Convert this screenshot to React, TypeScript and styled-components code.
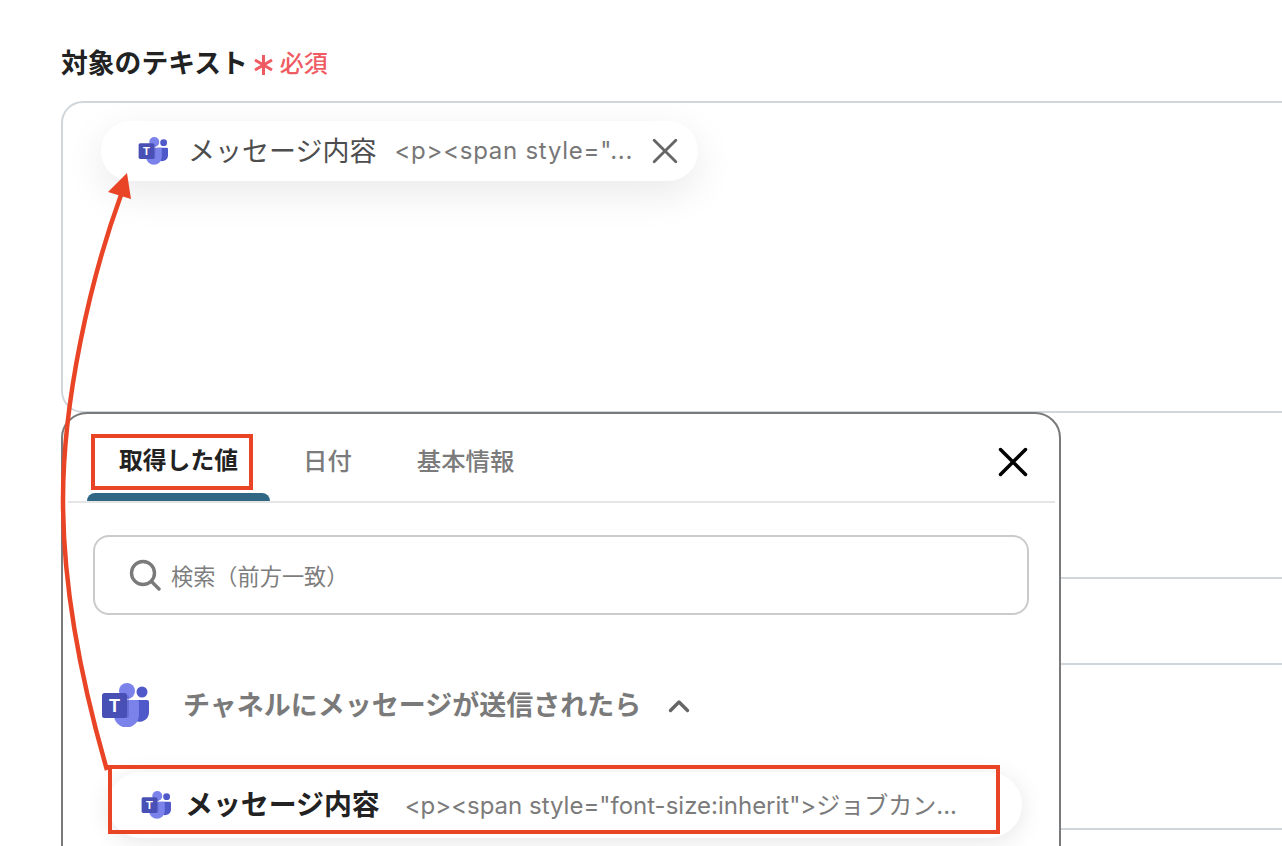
import * as React from "react";
import styled, { createGlobalStyle, css } from "styled-components";

const FONT = `Inter, "Noto Sans CJK JP", "Noto Sans", sans-serif`;
const RED = "#ea4426";

// kana and kanji sit a little low in the line box next to Inter
const raised = css`
  padding-bottom: 4px;
`;

const GlobalStyle = createGlobalStyle`
  html, body {
    margin: 0;
    padding: 0;
    background: #ffffff;
    overflow: hidden;
  }
  * {
    box-sizing: border-box;
  }
`;

const Page = styled.div`
  position: relative;
  width: 1282px;
  height: 846px;
  overflow: hidden;
  padding: 44px 0 0 61px;
  font-family: ${FONT};
`;

const LabelRow = styled.div`
  display: flex;
  align-items: center;
  height: 38px;
  margin-bottom: 19px;
`;

const LabelText = styled.span`
  ${raised}
  font-size: 26.8px;
  font-weight: 600;
  color: #222222;
  white-space: nowrap;
`;

const RequiredMark = styled.span`
  margin: 3px 0 0 5px;
  width: 22px;
  display: flex;
  justify-content: center;
  color: #ef5b62;
`;

const RequiredText = styled.span`
  ${raised}
  margin-left: 5px;
  font-size: 24px;
  font-weight: 500;
  color: #ef5b62;
  white-space: nowrap;
`;

const FieldStack = styled.div`
  display: flex;
  flex-direction: column;
  width: 1300px;
`;

const FieldBox = styled.div<{ $height: number; $gap?: number }>`
  height: ${(p) => p.$height}px;
  margin-top: ${(p) => p.$gap ?? 0}px;
  flex-shrink: 0;
  border: 2px solid #cfd6dc;
  border-radius: 22px 0 0 22px;
  padding: 18px 0 0 38px;
`;

const ValueChip = styled.div`
  display: flex;
  align-items: center;
  width: 597px;
  height: 60px;
  padding-left: 37px;
  border-radius: 30px;
  background: #ffffff;
  box-shadow: 0 12px 40px rgba(0, 0, 0, 0.09);
`;

const ChipTitle = styled.span`
  ${raised}
  margin-left: 20px;
  font-size: 27px;
  font-weight: 400;
  color: #4d4d4d;
  white-space: nowrap;
`;

const ChipValue = styled.span`
  padding-bottom: 2px;
  margin-left: 18px;
  width: 240px;
  font-size: 24px;
  letter-spacing: 0.74px;
  color: #777777;
  white-space: nowrap;
  overflow: hidden;
`;

const ChipClose = styled.span`
  display: flex;
  margin-left: 18px;
  color: #666666;
`;

const Panel = styled.div`
  position: absolute;
  left: 61px;
  top: 412px;
  width: 1000px;
  height: 480px;
  background: #ffffff;
  border: 2px solid #7a7a7a;
  border-radius: 26px 26px 0 0;
`;

const TabBar = styled.div`
  position: relative;
  display: flex;
  align-items: stretch;
  gap: 1px;
  height: 89px;
  margin: 0 4px 0 5px;
  padding-left: 19px;
  border-bottom: 2px solid #e3e5e6;
`;

const Tab = styled.div<{ $active?: boolean }>`
  position: relative;
  padding: 31px 32px 0;
  font-size: ${(p) => (p.$active ? 23.8 : 24.4)}px;
  line-height: 32px;
  font-weight: ${(p) => (p.$active ? 700 : 500)};
  color: ${(p) => (p.$active ? "#222222" : "#7b7b7b")};
  white-space: nowrap;
  ${(p) =>
    p.$active &&
    css`
      &::after {
        content: "";
        position: absolute;
        left: 0;
        right: 0;
        bottom: 0;
        height: 8px;
        background: #2f6784;
        border-radius: 8px 8px 0 0;
      }
    `}
`;

const TabClose = styled.button`
  position: absolute;
  right: 27px;
  top: 33px;
  display: flex;
  padding: 0;
  border: 0;
  background: none;
  color: #000000;
`;

const SearchBox = styled.div`
  display: flex;
  align-items: center;
  width: 936px;
  height: 80px;
  margin: 32px 0 0 30px;
  padding-left: 34px;
  border: 2px solid #cbcbcb;
  border-radius: 16px;
  color: #7a7a7a;
`;

const SearchText = styled.span`
  margin-left: 10px;
  font-size: 22.2px;
  color: #7d7d7d;
  white-space: nowrap;
  text-spacing-trim: space-all;
`;

const GroupRow = styled.div`
  display: flex;
  align-items: center;
  height: 44px;
  margin: 68px 0 0 38px;
`;

const GroupTitle = styled.span`
  ${raised}
  margin-left: 34px;
  font-size: 27px;
  font-weight: 600;
  color: #7a7a7a;
  white-space: nowrap;
`;

const GroupChevron = styled.span`
  display: flex;
  margin: 2px 0 0 27px;
  color: #666666;
`;

const ResultRow = styled.div`
  display: flex;
  align-items: center;
  width: 914px;
  height: 66px;
  margin: 45px 0 0 45px;
  padding-left: 33px;
  border-radius: 33px;
  background: #ffffff;
  box-shadow: 0 4px 24px rgba(0, 0, 0, 0.1);
`;

const ResultTitle = styled.span`
  ${raised}
  margin-left: 14px;
  font-size: 27.9px;
  font-weight: 700;
  color: #222222;
  white-space: nowrap;
`;

const ResultValue = styled.span`
  ${raised}
  margin-left: 25px;
  font-size: 24px;
  color: #7b7b7b;
  white-space: nowrap;
`;

const Highlight = styled.div`
  position: absolute;
  border: 4px solid ${RED};
  pointer-events: none;
`;

const TabHighlight = styled(Highlight)`
  left: 91px;
  top: 434px;
  width: 162px;
  height: 56px;
`;

const RowHighlight = styled(Highlight)`
  left: 108px;
  top: 765px;
  width: 892px;
  height: 69px;
`;

const ArrowLayer = styled.svg`
  position: absolute;
  left: 0;
  top: 0;
  pointer-events: none;
`;

const TeamsIcon = ({ size }: { size: number }) => (
  <svg width={size} height={(size * 44) / 48} viewBox="0 0 48 44" style={{ flexShrink: 0 }}>
    <circle cx="41" cy="9" r="5.5" fill="#5059c9" />
    <path d="M31 17h15a2 2 0 0 1 2 2v10a9.5 9.5 0 0 1-17 6z" fill="#5059c9" />
    <circle cx="26" cy="8" r="8" fill="#7b83eb" />
    <path d="M14 17h22a2 2 0 0 1 2 2v13a12.5 12.5 0 0 1-25 0V18z" fill="#7b83eb" />
    <path d="M13 12h13a2 2 0 0 1 2 2v18a3 3 0 0 1-3 3H13z" fill="#3f46a8" opacity="0.35" />
    <rect x="1" y="10" width="25" height="25" rx="2.5" fill="#4850b5" />
    <text
      x="13.5"
      y="29"
      textAnchor="middle"
      fontSize="18"
      fontWeight="700"
      fontFamily="Liberation Sans, sans-serif"
      fill="#ffffff"
    >
      T
    </text>
  </svg>
);

const CrossIcon = ({ size, weight }: { size: number; weight: number }) => (
  <svg width={size} height={size} viewBox="0 0 24 24" fill="none" stroke="currentColor" strokeWidth={weight} strokeLinecap="round">
    <path d="M2 2 22 22M22 2 2 22" />
  </svg>
);

export default function App() {
  return (
    <Page>
      <GlobalStyle />
      <LabelRow>
        <LabelText>対象のテキスト</LabelText>
        <RequiredMark>
          <svg width="19" height="20" viewBox="0 0 19 20" fill="none" stroke="currentColor" strokeWidth="3">
            <path d="M9.5 0v20M1 5l17 10M18 5 1 15" />
          </svg>
        </RequiredMark>
        <RequiredText>必須</RequiredText>
      </LabelRow>

      <FieldStack>
        <FieldBox $height={312}>
          <ValueChip>
            <TeamsIcon size={30} />
            <ChipTitle>メッセージ内容</ChipTitle>
            <ChipValue>&lt;p&gt;&lt;span style="...</ChipValue>
            <ChipClose>
              <CrossIcon size={26} weight={2.6} />
            </ChipClose>
          </ValueChip>
        </FieldBox>
        <FieldBox $height={88} $gap={164} />
        <FieldBox $height={200} $gap={163} />
      </FieldStack>

      <Panel>
        <TabBar>
          <Tab $active>取得した値</Tab>
          <Tab>日付</Tab>
          <Tab>基本情報</Tab>
          <TabClose>
            <CrossIcon size={30} weight={2.8} />
          </TabClose>
        </TabBar>
        <SearchBox>
          <svg width="32" height="32" viewBox="0 0 32 32" fill="none" stroke="currentColor" strokeWidth="3.4" strokeLinecap="round">
            <circle cx="14" cy="14" r="11.5" />
            <path d="M22.5 22.5 30 30" />
          </svg>
          <SearchText>検索（前方一致）</SearchText>
        </SearchBox>
        <GroupRow>
          <TeamsIcon size={48} />
          <GroupTitle>チャネルにメッセージが送信されたら</GroupTitle>
          <GroupChevron>
            <svg width="22" height="14" viewBox="0 0 22 14" fill="none" stroke="currentColor" strokeWidth="3.4" strokeLinecap="round" strokeLinejoin="round">
              <path d="M2.5 11.5 11 3l8.5 8.500" />
            </svg>
          </GroupChevron>
        </GroupRow>
        <ResultRow>
          <TeamsIcon size={30} />
          <ResultTitle>メッセージ内容</ResultTitle>
          <ResultValue>&lt;p&gt;&lt;span style="font-size:inherit"&gt;ジョブカン...</ResultValue>
        </ResultRow>
      </Panel>

      <TabHighlight />
      <RowHighlight />

      <ArrowLayer width="1282" height="846" viewBox="0 0 1282 846" fill="none">
        <path d="M107 770C78 670 63 580 63 500 63 400 90 280 121 195" stroke={RED} strokeWidth="4.5" />
        <path d="M127 173 108 192 131 199z" fill={RED} />
      </ArrowLayer>
    </Page>
  );
}
